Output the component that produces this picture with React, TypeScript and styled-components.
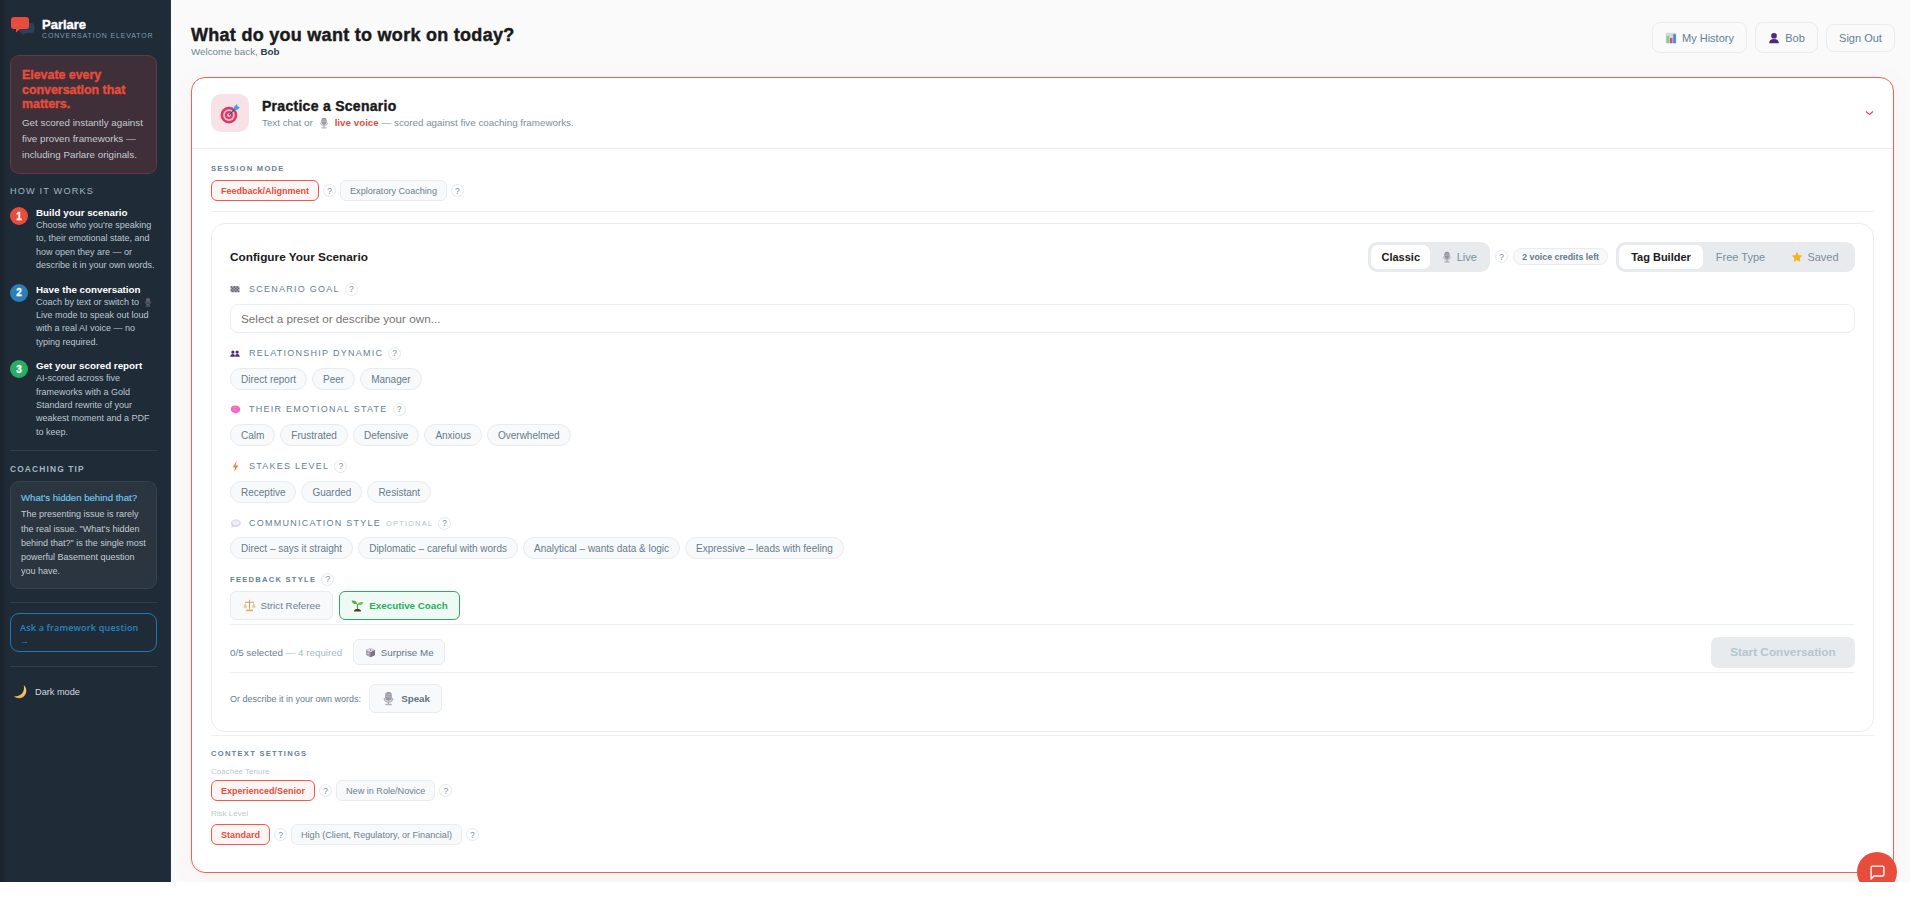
import React from "react";
import styled, { createGlobalStyle } from "styled-components";

const Global = createGlobalStyle`
  html, body { margin: 0; padding: 0; background: #fff; }
  body { font-family: "Liberation Sans", Arial, sans-serif; }
  * { box-sizing: border-box; }
`;

const Shell = styled.div`
  position: relative;
  display: flex;
  width: 1910px;
  height: 882px;
  overflow: hidden;
  background: #fafafa;
`;

const Sidebar = styled.aside`
  width: 171px;
  flex: none;
  padding: 17px 13px 0 10px;
  background: linear-gradient(90deg, #19232c 0, #1f2b37 9px);
  border-right: 1px solid #2c3a47;
  color: #c6d0d8;
`;

const Brand = styled.div`
  display: flex;
  align-items: flex-start;
  gap: 7px;
  height: 38px;
  padding-left: 1px;
`;

const BrandName = styled.div`
  font-size: 13px;
  line-height: 13px;
  margin-top: 1px;
  font-weight: 700;
  color: #fff;
  -webkit-text-stroke: 0.4px #fff;
`;

const BrandSub = styled.div`
  font-size: 7px;
  line-height: 9px;
  letter-spacing: 0.85px;
  color: #7f9cb0;
  white-space: nowrap;
`;

const Hero = styled.div`
  height: 119px;
  padding: 12px 11px;
  background: #3f2f38;
  border: 1px solid #5f3a3f;
  border-radius: 9px;
`;

const HeroTitle = styled.div`
  font-size: 12.4px;
  line-height: 14.6px;
  font-weight: 700;
  color: #e74c3c;
  -webkit-text-stroke: 0.4px #e74c3c;
  margin-bottom: 3px;
`;

const HeroText = styled.div`
  font-size: 9.8px;
  line-height: 16px;
  color: #c3ccd3;
`;

const SideHeading = styled.div<{ $bold?: boolean; $mt?: number }>`
  margin-top: ${(p) => p.$mt ?? 0}px;
  font-size: ${(p) => (p.$bold ? "8.4px" : "9.2px")};
  font-weight: ${(p) => (p.$bold ? 700 : 400)};
  line-height: 12px;
  letter-spacing: 1.15px;
  color: #a3b6c3;
`;

const Steps = styled.div`
  display: flex;
  flex-direction: column;
  gap: 10px;
  margin-top: 9px;
`;

const Step = styled.div`
  display: flex;
  gap: 8px;
`;

const StepNum = styled.div<{ $c: string }>`
  width: 18px;
  height: 18px;
  flex: none;
  margin-top: 1px;
  border-radius: 50%;
  background: ${(p) => p.$c};
  color: #fff;
  font-size: 10px;
  font-weight: 700;
  display: flex;
  align-items: center;
  justify-content: center;
  -webkit-text-stroke: 0.3px #fff;
`;

const StepTitle = styled.div`
  font-size: 9.8px;
  line-height: 13px;
  font-weight: 700;
  color: #fff;
  white-space: nowrap;
`;

const StepText = styled.div`
  font-size: 9px;
  line-height: 13.4px;
  color: #bcc8d1;
`;

const SideRule = styled.div<{ $t: number; $b: number }>`
  height: 1px;
  background: #2f3e4c;
  margin: ${(p) => p.$t}px 0 ${(p) => p.$b}px;
`;

const TipBox = styled.div`
  height: 108px;
  margin-top: 6px;
  padding: 9px 10px;
  background: #2a3540;
  border: 1px solid #36434f;
  border-radius: 9px;
`;

const TipTitle = styled.div`
  font-size: 9.6px;
  line-height: 14px;
  color: #6ec3ea;
  -webkit-text-stroke: 0.2px #6ec3ea;
  white-space: nowrap;
  margin-bottom: 2px;
`;

const TipText = styled.div`
  font-size: 9px;
  line-height: 14.3px;
  color: #c3ccd3;
`;

const AskButton = styled.div`
  height: 39px;
  padding: 7px 9px;
  border: 1px solid #2077b4;
  border-radius: 9px;
  font-family: "Noto Sans", sans-serif;
  font-size: 9px;
  font-weight: 600;
  line-height: 13px;
  letter-spacing: 0.15px;
  color: #2580bd;
`;

const DarkToggle = styled.div`
  display: flex;
  align-items: center;
  gap: 7px;
  margin: 17px 0 0 3px;
  font-size: 9.2px;
  line-height: 14px;
  color: #d3dbe0;
`;

const Ico = styled.svg<{ $o?: number; $mx?: number }>`
  flex: none;
  display: inline-block;
  vertical-align: -2px;
  opacity: ${(p) => p.$o ?? 1};
  margin: 0 ${(p) => p.$mx ?? 0}px;
`;

type IP = { s: number; o?: number; mx?: number };

const MoonIcon = ({ s }: IP) => (
  <Ico width={s} height={s} viewBox="0 0 16 16">
    <defs>
      <linearGradient id="moonG" x1="1" x2="0" y1="0" y2="1">
        <stop offset="0" stopColor="#f7d070" />
        <stop offset="1" stopColor="#f0a050" />
      </linearGradient>
    </defs>
    <path d="M11.500 1C15.500 5 15 11 10.500 14 7 16 3 15 1 13c4 .5 8-1 10-5 .8-2.200 1-4.500.5-7z" fill="url(#moonG)" />
  </Ico>
);

const MicIcon = ({ s, o, mx }: IP) => (
  <Ico width={s} height={s} viewBox="0 0 16 16" $o={o} $mx={mx}>
    <rect x="4.500" y="1" width="7" height="9.500" rx="3.200" fill="#6b6478" />
    <path d="M5 4h6M5 6.200h6" stroke="#a9a3b3" strokeWidth="0.8" />
    <path d="M3.500 7.500c0 3 1.800 4.300 4.500 4.300s4.500-1.300 4.500-4.300" fill="none" stroke="#8f889c" strokeWidth="1.300" />
    <rect x="7.200" y="11" width="1.600" height="3" fill="#8f889c" />
    <rect x="4.500" y="13.500" width="7" height="1.800" rx=".6" fill="#8f889c" />
  </Ico>
);

const TargetIcon = ({ s }: IP) => (
  <Ico width={s} height={s} viewBox="0 0 20 20">
    <circle cx="8.500" cy="11.500" r="8" fill="#d93a68" />
    <circle cx="8.500" cy="11.500" r="5.600" fill="#f4b9ca" />
    <circle cx="8.500" cy="11.500" r="3.800" fill="#d93a68" />
    <circle cx="8.500" cy="11.500" r="1.800" fill="#f4b9ca" />
    <path d="M8.500 11.500 15 5" stroke="#23618f" strokeWidth="1.100" />
    <path d="M13 4l3-3 .8 2.200L19 4l-3 3-2.400-.5z" fill="#3ba5ec" />
  </Ico>
);

const ChartIcon = ({ s }: IP) => (
  <Ico width={s} height={s} viewBox="0 0 16 16">
    <rect x="1" y="1" width="14" height="14" fill="#d9d6de" />
    <rect x="2" y="5" width="3.500" height="10" fill="#79d08f" />
    <rect x="6.500" y="8" width="3.500" height="7" fill="#e2487f" />
    <rect x="11" y="3" width="3.500" height="12" fill="#3c8fcf" />
  </Ico>
);

const PersonIcon = ({ s }: IP) => (
  <Ico width={s} height={s} viewBox="0 0 16 16">
    <circle cx="8" cy="5" r="3.800" fill="#4b2a80" />
    <path d="M1.500 15c0-4 2.500-5.800 6.500-5.800s6.500 1.800 6.500 5.800z" fill="#4b2a80" />
  </Ico>
);

const StarIcon = ({ s }: IP) => (
  <Ico width={s} height={s} viewBox="0 0 16 16">
    <path d="M8 .8l2.200 4.700 5 .6-3.700 3.400 1 5L8 12l-4.500 2.500 1-5L.8 6.100l5-.6z" fill="#efb51f" />
  </Ico>
);

const FlagIcon = ({ s }: IP) => (
  <Ico width={s} height={s} viewBox="0 0 16 16">
    <rect x="1" y="3.500" width="14" height="9.500" fill="#a7a2ae" />
    <path d="M1 3.500h2.300v2.300H1zM5.700 3.500H8v2.300H5.700zM10.400 3.500h2.300v2.300h-2.300zM3.300 5.800h2.400v2.400H3.300zM8 5.800h2.400v2.400H8zM12.700 5.800H15v2.400h-2.300zM1 8.200h2.300v2.400H1zM5.700 8.200H8v2.400H5.700zM10.400 8.200h2.300v2.400h-2.300zM3.300 10.600h2.400V13H3.300zM8 10.600h2.400V13H8zM12.700 10.600H15V13h-2.300z" fill="#6a6575" />
  </Ico>
);

const PeopleIcon = ({ s }: IP) => (
  <Ico width={s} height={s} viewBox="0 0 16 16">
    <circle cx="4.600" cy="6.500" r="2.600" fill="#4b2a80" />
    <circle cx="11.400" cy="6.500" r="2.600" fill="#4b2a80" />
    <path d="M.5 14c0-3 1.500-4.600 4-4.600 1.400 0 2.500.5 3.100 1.600V14zM8.400 14v-3c.6-1.100 1.700-1.600 3.100-1.600 2.500 0 4 1.600 4 4.600z" fill="#4b2a80" />
  </Ico>
);

const BrainIcon = ({ s }: IP) => (
  <Ico width={s} height={s} viewBox="0 0 16 16">
    <path d="M3 3.500C5 1.800 9 1.600 11.500 2.800c2.800 1 4 3.800 3.200 6.400-.6 2-2 2.800-3.200 2.800-.4 1.600-2 2.200-3.200 1.300C6.600 13 4 12.500 2.800 10.800 1 10 .3 5.500 3 3.500z" fill="#f26ac0" />
    <path d="M5 5c1.500-.6 3-.2 4 .8M4.500 8.500c1.500-.4 3 0 4 1" fill="none" stroke="#fba6dc" strokeWidth=".8" />
  </Ico>
);

const BoltIcon = ({ s }: IP) => (
  <Ico width={s} height={s} viewBox="0 0 16 16">
    <path d="M9.500.5 4 9h3.500L6 15.500 12 6.500H8.500z" fill="#f2703c" />
    <path d="M8.800 3 6 8h2.500" fill="#f7b15a" />
  </Ico>
);

const BubbleIcon = ({ s }: IP) => (
  <Ico width={s} height={s} viewBox="0 0 16 16">
    <ellipse cx="8.500" cy="7.500" rx="7" ry="5.500" fill="#d9d3ee" />
    <ellipse cx="8.500" cy="7" rx="5" ry="3.500" fill="#f0edf9" />
    <path d="M3 10.500 1.500 14l5-2z" fill="#d9d3ee" />
  </Ico>
);

const ScalesIcon = ({ s }: IP) => (
  <Ico width={s} height={s} viewBox="0 0 16 16">
    <path d="M8 1v11M2.500 4h11" stroke="#d99a62" strokeWidth="1.200" />
    <path d="M.5 9.500 2.800 4.500 5 9.500a2.300 2 0 0 1-4.500 0zM11 9.500l2.300-5 2.200 5a2.300 2 0 0 1-4.500 0z" fill="#f5c595" />
    <path d="M4.500 13h7l1 2h-9z" fill="#f0a75a" />
  </Ico>
);

const SproutIcon = ({ s }: IP) => (
  <Ico width={s} height={s} viewBox="0 0 16 16">
    <path d="M8 13V6" stroke="#4f9f45" strokeWidth="1.500" />
    <path d="M8 6C7 3 4 1.500 .8 2c.4 3 3.500 5 7.200 4z" fill="#4cb04a" />
    <path d="M8 7c.8-2.500 3.500-3.800 7.200-3-.8 3-3.500 4.500-7.200 3z" fill="#7cc04f" />
    <path d="M3.500 15.500c.3-2.500 2-3.200 4.500-3.200s4.200.7 4.500 3.200z" fill="#5a3526" />
  </Ico>
);

const DiceIcon = ({ s }: IP) => (
  <Ico width={s} height={s} viewBox="0 0 16 16">
    <path d="M8 1l6.500 3.200v7.600L8 15l-6.500-3.200V4.200z" fill="#a49cae" />
    <path d="M8 1l6.500 3.200L8 7.500 1.500 4.200z" fill="#dcd8e2" />
    <path d="M8 7.500V15l6.500-3.200V4.200z" fill="#7a7088" />
    <circle cx="8" cy="4.200" r="1" fill="#6b5f80" />
    <circle cx="4.500" cy="9.500" r="1" fill="#eee" />
    <circle cx="11.200" cy="9" r="1" fill="#e2487f" />
  </Ico>
);

const Main = styled.main`
  flex: 1;
  min-width: 0;
  padding: 22px 15px 0 20px;
`;

const TopBar = styled.div`
  display: flex;
  justify-content: space-between;
  align-items: flex-start;
  height: 55px;
`;

const PageTitle = styled.h1`
  margin: 3px 0 0;
  font-size: 18px;
  line-height: 20px;
  font-weight: 700;
  letter-spacing: 0.28px;
  color: #1a1a1a;
  -webkit-text-stroke: 0.45px #1a1a1a;
`;

const Welcome = styled.div`
  margin-top: 1px;
  font-size: 9.8px;
  line-height: 12px;
  color: #6c8494;
  b { color: #2c3e50; }
`;

const TopActions = styled.div`
  display: flex;
  align-items: center;
  gap: 8px;
  height: 31px;
`;

const TopButton = styled.div<{ $w: number; $h: number }>`
  width: ${(p) => p.$w}px;
  height: ${(p) => p.$h}px;
  display: flex;
  align-items: center;
  justify-content: center;
  gap: 5px;
  background: #fafafa;
  border: 1px solid #e9ecef;
  border-radius: 8px;
  font-size: 11px;
  color: #5f7f96;
`;

const Card = styled.section`
  width: 1703px;
  height: 796px;
  background: #fff;
  border: 1px solid #f0605a;
  border-radius: 14px;
  box-shadow: 0 4px 24px rgba(231, 76, 60, 0.06);
`;

const CardHead = styled.header`
  display: flex;
  align-items: center;
  gap: 13px;
  height: 71px;
  padding: 0 19px;
  border-bottom: 1px solid #e9eef3;
`;

const IconTile = styled.div`
  width: 38px;
  height: 38px;
  display: flex;
  align-items: center;
  justify-content: center;
  background: #f8e1e7;
  border-radius: 10px;
`;

const HeadBody = styled.div`
  flex: 1;
`;

const CardTitle = styled.div`
  margin-top: 2px;
  font-size: 14px;
  line-height: 17px;
  font-weight: 700;
  letter-spacing: 0.28px;
  color: #1a1a1a;
  -webkit-text-stroke: 0.4px #1a1a1a;
`;

const CardSub = styled.div`
  margin-top: 1px;
  font-size: 9.8px;
  line-height: 14px;
  color: #7a8e9c;
  display: flex;
  align-items: center;
  white-space: pre;
  b { color: #e74c3c; font-weight: 700; }
`;

const CardBody = styled.div`
  padding: 0 19px;
`;

const SectionLabel = styled.div<{ $mt: number }>`
  display: flex;
  align-items: center;
  height: 10px;
  margin-top: ${(p) => p.$mt}px;
  font-size: 7.6px;
  font-weight: 700;
  letter-spacing: 1.25px;
  color: #668294;
`;

const OptionRow = styled.div<{ $mt: number }>`
  display: flex;
  align-items: center;
  gap: 4px;
  margin-top: ${(p) => p.$mt}px;
`;

const Option = styled.div<{ $on?: boolean }>`
  height: 21px;
  display: flex;
  align-items: center;
  padding: 0 9px;
  border-radius: 6px;
  border: 1px solid ${(p) => (p.$on ? "#ee5a4e" : "#e9ecef")};
  background: ${(p) => (p.$on ? "#fff5f4" : "#f8f9fa")};
  color: ${(p) => (p.$on ? "#e74c3c" : "#6c8092")};
  font-size: ${(p) => (p.$on ? "9px" : "9.1px")};
  font-weight: ${(p) => (p.$on ? 700 : 400)};
  white-space: nowrap;
`;

const Help = styled.div<{ $ml?: number }>`
  width: 13px;
  height: 13px;
  flex: none;
  display: flex;
  align-items: center;
  justify-content: center;
  margin-left: ${(p) => p.$ml ?? 0}px;
  background: #fff;
  border: 1px solid #e5e9ed;
  border-radius: 50%;
  font-size: 8.5px;
  font-weight: 400;
  letter-spacing: 0;
  color: #7a8e9c;
`;

const Rule = styled.div<{ $mt: number }>`
  height: 1px;
  background: #edf0f3;
  margin-top: ${(p) => p.$mt}px;
`;

const ConfigCard = styled.div`
  height: 509px;
  margin-top: 11px;
  padding: 0 18px;
  border: 1px solid #e9ecef;
  border-radius: 14px;
`;

const ConfigHead = styled.div`
  display: flex;
  align-items: center;
  height: 49px;
  padding-top: 16px;
`;

const ConfigTitle = styled.div`
  flex: 1;
  font-size: 11.8px;
  font-weight: 700;
  color: #1a1a1a;
`;

const Segmented = styled.div`
  display: flex;
  align-items: center;
  height: 30px;
  padding: 3px;
  background: #e8ebee;
  border-radius: 9px;
`;

const Seg = styled.div<{ $w: number; $on?: boolean }>`
  width: ${(p) => p.$w}px;
  height: 24px;
  display: flex;
  align-items: center;
  justify-content: center;
  gap: 4px;
  border-radius: 7px;
  background: ${(p) => (p.$on ? "#fff" : "transparent")};
  color: ${(p) => (p.$on ? "#1a1a1a" : "#7a8e9c")};
  font-size: 11px;
  font-weight: ${(p) => (p.$on ? 700 : 400)};
`;

const Credits = styled.div`
  height: 17px;
  display: flex;
  align-items: center;
  margin: 0 8px 0 5px;
  padding: 0 8px;
  background: #f8f9fa;
  border: 1px solid #e9ecef;
  border-radius: 9px;
  font-size: 8.8px;
  font-weight: 700;
  color: #66798a;
  white-space: nowrap;
`;

const FieldLabel = styled.div<{ $mt: number }>`
  display: flex;
  align-items: center;
  height: 14px;
  margin-top: ${(p) => p.$mt}px;
  font-size: 9px;
  letter-spacing: 1.25px;
  color: #66808f;
  white-space: nowrap;
`;

const LabelIcon = styled.span`
  width: 19px;
  flex: none;
  display: flex;
  align-items: center;
`;

const Optional = styled.span`
  margin-left: 5px;
  font-size: 7.4px;
  letter-spacing: 1.2px;
  color: #b2c0c9;
`;

const TextField = styled.div`
  height: 29px;
  margin-top: 8px;
  display: flex;
  align-items: center;
  padding: 0 10px;
  background: #fff;
  border: 1px solid #e9eef3;
  border-radius: 8px;
  font-size: 11.7px;
  color: #757575;
`;

const Chips = styled.div<{ $mt?: number }>`
  display: flex;
  gap: 5px;
  margin-top: ${(p) => p.$mt ?? 8}px;
`;

const Chip = styled.div`
  height: 22px;
  display: flex;
  align-items: center;
  padding: 0 10px;
  background: #f8f9fa;
  border: 1px solid #e9ecef;
  border-radius: 11px;
  font-size: 10px;
  color: #667b8b;
  white-space: nowrap;
`;

const StyleRow = styled.div`
  display: flex;
  gap: 6px;
  margin-top: 7px;
`;

const StyleBtn = styled.div<{ $on?: boolean; $w: number }>`
  width: ${(p) => p.$w}px;
  height: 29px;
  display: flex;
  align-items: center;
  justify-content: center;
  gap: 5px;
  border-radius: 6px;
  border: 1px solid ${(p) => (p.$on ? "#27ae60" : "#e9ecef")};
  background: ${(p) => (p.$on ? "#f0faf4" : "#f8f9fa")};
  color: ${(p) => (p.$on ? "#27ae60" : "#6c8092")};
  font-size: 9.8px;
  font-weight: ${(p) => (p.$on ? 700 : 400)};
`;

const ActionRow = styled.div`
  display: flex;
  align-items: center;
  height: 47px;
  padding-top: 7px;
`;

const Count = styled.div`
  font-size: 9.8px;
  color: #6c8092;
  span { color: #aab9c2; }
`;

const SmallBtn = styled.div<{ $w: number; $h: number; $ml: number; $bold?: boolean }>`
  width: ${(p) => p.$w}px;
  height: ${(p) => p.$h}px;
  margin-left: ${(p) => p.$ml}px;
  display: flex;
  align-items: center;
  justify-content: center;
  gap: 5px;
  background: #f8f9fa;
  border: 1px solid #e9ecef;
  border-radius: 6px;
  font-size: 9.8px;
  font-weight: ${(p) => (p.$bold ? 700 : 400)};
  color: #5f7585;
`;

const StartBtn = styled.div`
  width: 144px;
  height: 31px;
  margin-left: auto;
  display: flex;
  align-items: center;
  justify-content: center;
  background: #e8ebee;
  border-radius: 7px;
  font-size: 11.8px;
  font-weight: 700;
  color: #b6c5ce;
`;

const DescribeRow = styled.div`
  display: flex;
  align-items: center;
  height: 52px;
  padding-bottom: 1px;
  font-size: 9px;
  color: #667b8b;
`;

const SubLabel = styled.div<{ $mt: number }>`
  margin-top: ${(p) => p.$mt}px;
  font-size: 8px;
  line-height: 10px;
  color: #bcc8d0;
`;

const Fab = styled.div`
  position: absolute;
  left: 1857px;
  top: 852px;
  width: 40px;
  height: 40px;
  display: flex;
  align-items: center;
  justify-content: center;
  background: #e74c3c;
  border-radius: 50%;
`;

const LogoMark = () => (
  <svg width="24" height="20" viewBox="0 0 24 20">
    <path d="M11 6h9a3.500 3.500 0 0 1 3.500 3.500v3a3.500 3.500 0 0 1-3.500 3.500h-5l-4 2.500v-2.500a3 3 0 0 1-3-3v-3A3.500 3.500 0 0 1 11 6z" fill="#2c4159" />
    <path d="M3 0h12a3 3 0 0 1 3 3v6a3 3 0 0 1-3 3H9l-4 3.500V12H3a3 3 0 0 1-3-3V3a3 3 0 0 1 3-3z" fill="#e74c3c" />
  </svg>
);

const Chat = () => (
  <svg width="17" height="17" viewBox="0 0 24 24" fill="none" stroke="#fff" strokeWidth="2" strokeLinecap="round" strokeLinejoin="round">
    <path d="M21 15a2 2 0 0 1-2 2H7l-4 4V5a2 2 0 0 1 2-2h14a2 2 0 0 1 2 2z" />
  </svg>
);

const Chevron = () => (
  <svg width="9" height="6" viewBox="0 0 9 6" fill="none" stroke="#e74c3c" strokeWidth="1.100">
    <path d="M1 1.500 4.500 4.500 8 1.500" />
  </svg>
);

const steps = [
  { c: "#e74c3c", t: "Build your scenario", d: "Choose who you're speaking to, their emotional state, and how open they are — or describe it in your own words." },
  { c: "#2980b9", t: "Have the conversation", d: <>Coach by text or switch to <MicIcon s={10} o={0.65} mx={1} /> Live mode to speak out loud with a real AI voice — no typing required.</> },
  { c: "#27ae60", t: "Get your scored report", d: "AI-scored across five frameworks with a Gold Standard rewrite of your weakest moment and a PDF to keep." },
];

export default function App() {
  return (
    <>
      <Global />
      <Shell>
        <Sidebar>
          <Brand>
            <LogoMark />
            <div>
              <BrandName>Parlare</BrandName>
              <BrandSub>CONVERSATION ELEVATOR</BrandSub>
            </div>
          </Brand>
          <Hero>
            <HeroTitle>Elevate every conversation that matters.</HeroTitle>
            <HeroText>Get scored instantly against five proven frameworks — including Parlare originals.</HeroText>
          </Hero>
          <SideHeading $mt={11}>HOW IT WORKS</SideHeading>
          <Steps>
            {steps.map((s, i) => (
              <Step key={s.t}>
                <StepNum $c={s.c}>{i + 1}</StepNum>
                <div>
                  <StepTitle>{s.t}</StepTitle>
                  <StepText>{s.d}</StepText>
                </div>
              </Step>
            ))}
          </Steps>
          <SideRule $t={11} $b={12} />
          <SideHeading $bold>COACHING TIP</SideHeading>
          <TipBox>
            <TipTitle>What's hidden behind that?</TipTitle>
            <TipText>The presenting issue is rarely the real issue. "What's hidden behind that?" is the single most powerful Basement question you have.</TipText>
          </TipBox>
          <SideRule $t={13} $b={10} />
          <AskButton>Ask a framework question →</AskButton>
          <SideRule $t={14} $b={0} />
          <DarkToggle>
            <MoonIcon s={15} />
            Dark mode
          </DarkToggle>
        </Sidebar>
        <Main>
          <TopBar>
            <div>
              <PageTitle>What do you want to work on today?</PageTitle>
              <Welcome>Welcome back, <b>Bob</b></Welcome>
            </div>
            <TopActions>
              <TopButton $w={95} $h={31}><ChartIcon s={12} />My History</TopButton>
              <TopButton $w={63} $h={31}><PersonIcon s={12} />Bob</TopButton>
              <TopButton $w={69} $h={28}>Sign Out</TopButton>
            </TopActions>
          </TopBar>
          <Card>
            <CardHead>
              <IconTile><TargetIcon s={21} /></IconTile>
              <HeadBody>
                <CardTitle>Practice a Scenario</CardTitle>
                <CardSub>Text chat or<MicIcon s={12} o={0.65} mx={5} /><b>live voice</b> — scored against five coaching frameworks.</CardSub>
              </HeadBody>
              <Chevron />
            </CardHead>
            <CardBody>
              <SectionLabel $mt={14}>SESSION MODE</SectionLabel>
              <OptionRow $mt={7}>
                <Option $on>Feedback/Alignment</Option><Help>?</Help>
                <Option>Exploratory Coaching</Option><Help>?</Help>
              </OptionRow>
              <Rule $mt={10} />
              <ConfigCard>
                <ConfigHead>
                  <ConfigTitle>Configure Your Scenario</ConfigTitle>
                  <Segmented>
                    <Seg $w={59} $on>Classic</Seg>
                    <Seg $w={57}><MicIcon s={12} o={0.65} />Live</Seg>
                  </Segmented>
                  <Help $ml={5}>?</Help>
                  <Credits>2 voice credits left</Credits>
                  <Segmented>
                    <Seg $w={84} $on>Tag Builder</Seg>
                    <Seg $w={75}>Free Type</Seg>
                    <Seg $w={74}><StarIcon s={12} />Saved</Seg>
                  </Segmented>
                </ConfigHead>
                <FieldLabel $mt={9}><LabelIcon><FlagIcon s={10} /></LabelIcon>SCENARIO GOAL<Help $ml={5}>?</Help></FieldLabel>
                <TextField>Select a preset or describe your own...</TextField>
                <FieldLabel $mt={13}><LabelIcon><PeopleIcon s={10} /></LabelIcon>RELATIONSHIP DYNAMIC<Help $ml={5}>?</Help></FieldLabel>
                <Chips><Chip>Direct report</Chip><Chip>Peer</Chip><Chip>Manager</Chip></Chips>
                <FieldLabel $mt={12}><LabelIcon><BrainIcon s={11} /></LabelIcon>THEIR EMOTIONAL STATE<Help $ml={5}>?</Help></FieldLabel>
                <Chips><Chip>Calm</Chip><Chip>Frustrated</Chip><Chip>Defensive</Chip><Chip>Anxious</Chip><Chip>Overwhelmed</Chip></Chips>
                <FieldLabel $mt={13}><LabelIcon><BoltIcon s={11} /></LabelIcon>STAKES LEVEL<Help $ml={5}>?</Help></FieldLabel>
                <Chips><Chip>Receptive</Chip><Chip>Guarded</Chip><Chip>Resistant</Chip></Chips>
                <FieldLabel $mt={13}><LabelIcon><BubbleIcon s={11} /></LabelIcon>COMMUNICATION STYLE<Optional>OPTIONAL</Optional><Help $ml={5}>?</Help></FieldLabel>
                <Chips $mt={7}><Chip>Direct – says it straight</Chip><Chip>Diplomatic – careful with words</Chip><Chip>Analytical – wants data &amp; logic</Chip><Chip>Expressive – leads with feeling</Chip></Chips>
                <SectionLabel $mt={15}>FEEDBACK STYLE<Help $ml={5}>?</Help></SectionLabel>
                <StyleRow>
                  <StyleBtn $w={103}><ScalesIcon s={13} />Strict Referee</StyleBtn>
                  <StyleBtn $w={121} $on><SproutIcon s={13} />Executive Coach</StyleBtn>
                </StyleRow>
                <Rule $mt={4} />
                <ActionRow>
                  <Count>0/5 selected <span>— 4 required</span></Count>
                  <SmallBtn $w={92} $h={26} $ml={11}><DiceIcon s={11} />Surprise Me</SmallBtn>
                  <StartBtn>Start Conversation</StartBtn>
                </ActionRow>
                <Rule $mt={0} />
                <DescribeRow>
                  Or describe it in your own words:
                  <SmallBtn $w={73} $h={29} $ml={8} $bold><MicIcon s={15} o={0.65} />Speak</SmallBtn>
                </DescribeRow>
              </ConfigCard>
              <Rule $mt={3} />
              <SectionLabel $mt={12}>CONTEXT SETTINGS</SectionLabel>
              <SubLabel $mt={9}>Coachee Tenure</SubLabel>
              <OptionRow $mt={3}>
                <Option $on>Experienced/Senior</Option><Help>?</Help>
                <Option>New in Role/Novice</Option><Help>?</Help>
              </OptionRow>
              <SubLabel $mt={8}>Risk Level</SubLabel>
              <OptionRow $mt={5}>
                <Option $on>Standard</Option><Help>?</Help>
                <Option>High (Client, Regulatory, or Financial)</Option><Help>?</Help>
              </OptionRow>
            </CardBody>
          </Card>
        </Main>
        <Fab><Chat /></Fab>
      </Shell>
    </>
  );
}
